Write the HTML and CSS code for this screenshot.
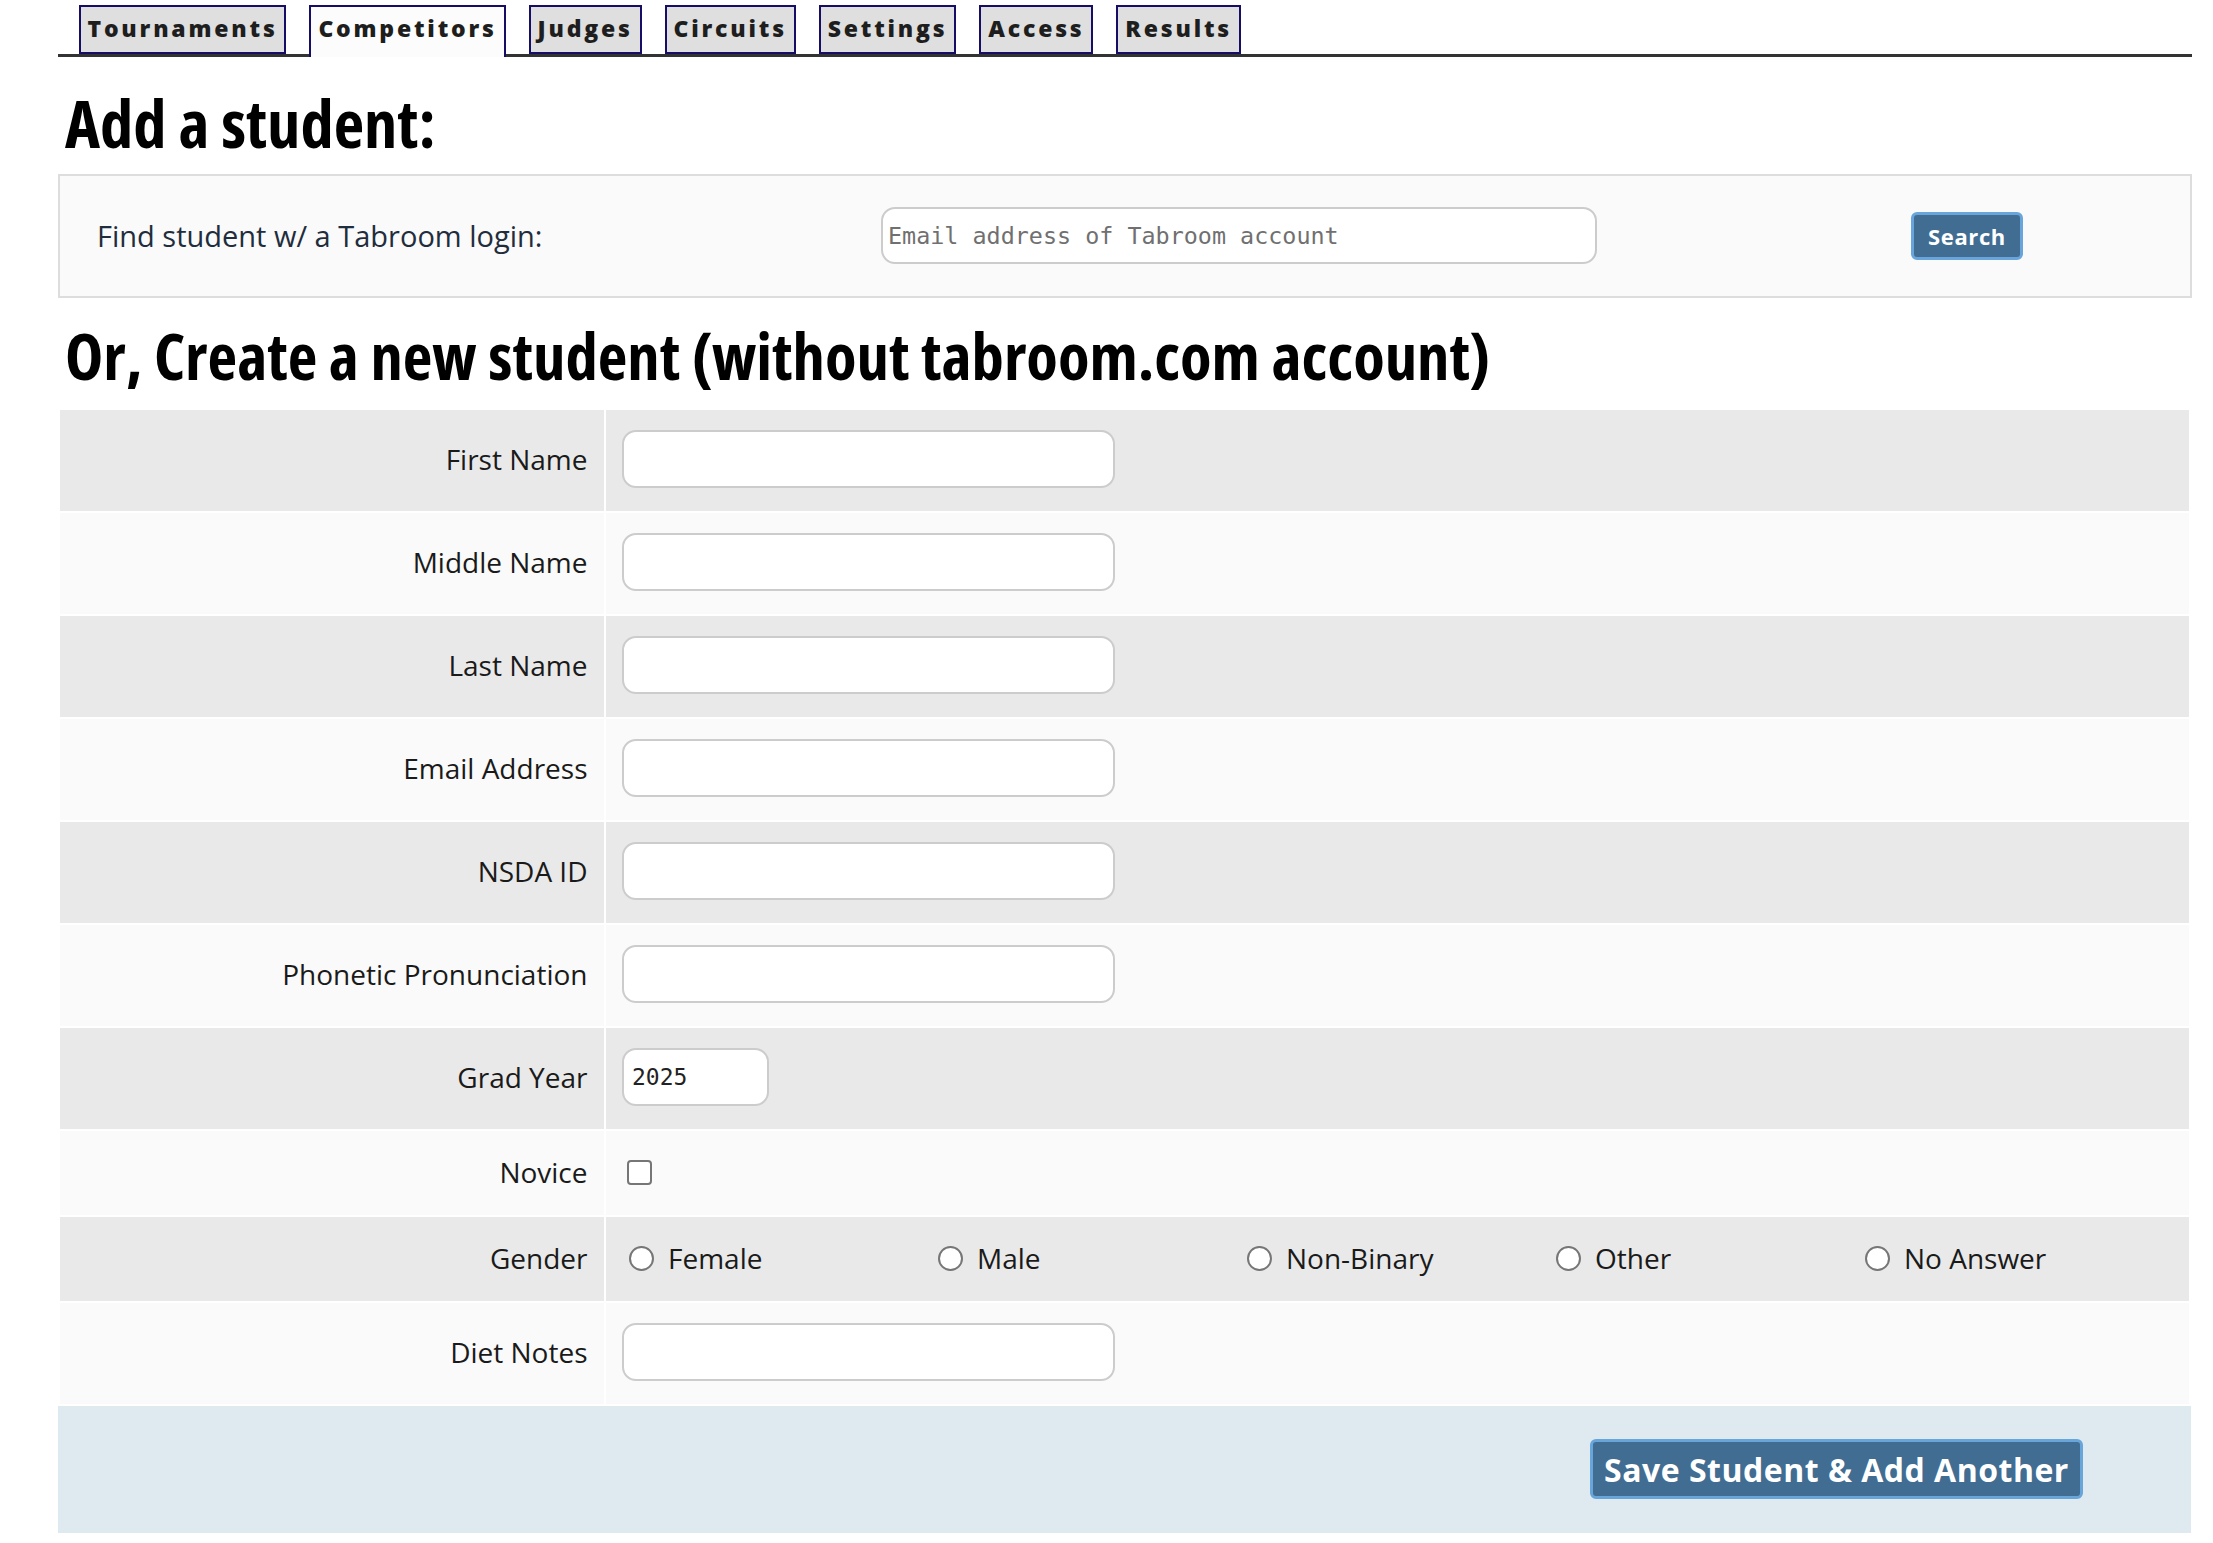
FILE: index.html
```html
<!DOCTYPE html>
<html lang="en">
<head>
<meta charset="utf-8">
<title>Add a student</title>
<link rel="stylesheet" href="styles.css">
</head>
<body>
<div class="page">
  <nav class="tabs">
    <a class="tab">Tournaments</a>
    <a class="tab tab-active">Competitors</a>
    <a class="tab">Judges</a>
    <a class="tab">Circuits</a>
    <a class="tab">Settings</a>
    <a class="tab">Access</a>
    <a class="tab">Results</a>
  </nav>

  <h1 class="title title-main">Add a student:</h1>

  <form class="finder">
    <label class="finder-label">Find student w/ a Tabroom login:</label>
    <input class="finder-input" type="text" placeholder="Email address of Tabroom account">
    <button class="btn btn-small" type="button">Search</button>
  </form>

  <h2 class="title title-sub">Or, Create a new student (without tabroom.com account)</h2>

  <table class="student-form">
    <tr class="odd">
      <td class="lbl">First Name</td>
      <td class="val"><input class="field" type="text"></td>
    </tr>
    <tr class="even">
      <td class="lbl">Middle Name</td>
      <td class="val"><input class="field" type="text"></td>
    </tr>
    <tr class="odd">
      <td class="lbl">Last Name</td>
      <td class="val"><input class="field" type="text"></td>
    </tr>
    <tr class="even">
      <td class="lbl">Email Address</td>
      <td class="val"><input class="field" type="text"></td>
    </tr>
    <tr class="odd">
      <td class="lbl">NSDA ID</td>
      <td class="val"><input class="field" type="text"></td>
    </tr>
    <tr class="even">
      <td class="lbl">Phonetic Pronunciation</td>
      <td class="val"><input class="field" type="text"></td>
    </tr>
    <tr class="odd">
      <td class="lbl">Grad Year</td>
      <td class="val"><input class="field field-short" type="text" value="2025"></td>
    </tr>
    <tr class="even text-row">
      <td class="lbl">Novice</td>
      <td class="val"><input class="check" type="checkbox"></td>
    </tr>
    <tr class="odd text-row">
      <td class="lbl">Gender</td>
      <td class="val">
        <div class="radios">
          <label class="opt"><input class="radio" type="radio" name="g"><span>Female</span></label>
          <label class="opt"><input class="radio" type="radio" name="g"><span>Male</span></label>
          <label class="opt"><input class="radio" type="radio" name="g"><span>Non-Binary</span></label>
          <label class="opt"><input class="radio" type="radio" name="g"><span>Other</span></label>
          <label class="opt"><input class="radio" type="radio" name="g"><span>No Answer</span></label>
        </div>
      </td>
    </tr>
    <tr class="even">
      <td class="lbl">Diet Notes</td>
      <td class="val"><input class="field" type="text"></td>
    </tr>
  </table>

  <div class="footer">
    <button class="btn btn-big" type="button">Save Student &amp; Add Another</button>
  </div>
</div>
</body>
</html>
```
FILE: styles.css
```css
* { box-sizing: border-box; }

body {
  margin: 0;
  background: #ffffff;
  font-family: "Open Sans", "DejaVu Sans", sans-serif;
  color: #1a1a1a;
}

.page {
  margin-left: 58px;
  width: 2134px;
}

/* tabs */
.tabs {
  display: flex;
  align-items: flex-end;
  gap: 23px;
  margin-top: 5px;
  padding-left: 20.5px;
  border-bottom: 3px solid #333333;
}

.tab {
  display: block;
  height: 49px;
  padding: 0 6.8px 2px 7px;
  border: 2px solid #150d66;
  background: #dfdfdf;
  font-weight: 800;
  font-size: 23px;
  line-height: 43px;
  letter-spacing: 2.8px;
  color: #1e1e1e;
}

.tab-active {
  position: relative;
  z-index: 1;
  height: 52px;
  margin-bottom: -3px;
  padding-bottom: 7px;
  border-bottom: none;
  background: #fcfcfc;
}

/* headings */
.title {
  margin: 0 0 0 7px;
  font-family: "Open Sans", "Liberation Sans Narrow", "DejaVu Sans Condensed", sans-serif;
  font-stretch: 75%;
  font-weight: 700;
  line-height: 84px;
  color: #000000;
}

.title-main {
  margin-top: 22.7px;
  font-size: 66.5px;
}

.title-sub {
  margin-top: 15px;
  font-size: 64.7px;
}

/* finder box */
.finder {
  display: grid;
  grid-template-columns: 784px 716px auto;
  align-items: center;
  height: 124px;
  margin-top: 10.3px;
  padding-left: 37px;
  border: 2px solid #dddddd;
  background: #fafafa;
}

.finder-label {
  font-size: 29px;
  line-height: 40px;
  color: #1f2d3d;
}

.finder-input {
  width: 716px;
  height: 57px;
  padding: 0 5px;
  border: 2px solid #cccccc;
  border-radius: 14px;
  background: #ffffff;
  font-family: "DejaVu Sans Mono", monospace;
  font-size: 23.4px;
  color: #222222;
}

.finder-input::placeholder { color: #707070; }

.btn {
  border: 3px solid #67a5da;
  border-radius: 6px;
  background: #416d92;
  color: #ffffff;
  font-family: "Open Sans", sans-serif;
  font-weight: 700;
  padding: 0;
}

.btn-small {
  justify-self: start;
  margin-left: 314px;
  width: 112px;
  height: 48px;
  font-size: 22px;
  letter-spacing: 0.6px;
}

/* form table */
.student-form {
  width: 2133px;
  margin-top: 11px;
  border-collapse: separate;
  border-spacing: 2px;
  table-layout: fixed;
}

.student-form td {
  vertical-align: middle;
  padding: 20.5px 16px 22.5px;
}

.text-row td {
  padding-bottom: 21.5px;
}

.odd td { background: #e9e9e9; }
.even td { background: #fafafa; }

.lbl {
  width: 544px;
  text-align: right;
  padding-right: 16.5px !important;
  font-size: 28px;
  line-height: 42px;
  color: #1a1a1a;
}

.field {
  display: block;
  width: 493px;
  height: 58px;
  padding: 0 8px;
  border: 2px solid #cccccc;
  border-radius: 14px;
  background: #ffffff;
  font-family: "DejaVu Sans Mono", monospace;
  font-size: 23px;
  color: #222222;
}

.field-short { width: 147px; }

.check {
  appearance: none;
  display: block;
  width: 25px;
  height: 25px;
  margin: 0 0 0 5px;
  border: 2px solid #767676;
  border-radius: 4px;
  background: #ffffff;
}

.radios {
  display: grid;
  grid-template-columns: repeat(5, 309px);
}

.opt {
  display: flex;
  align-items: center;
  font-size: 28px;
  line-height: 42px;
  color: #1a1a1a;
}

.radio {
  appearance: none;
  flex: none;
  width: 25px;
  height: 25px;
  margin: 0 14px 0 7px;
  border: 2px solid #767676;
  border-radius: 50%;
  background: #ffffff;
}

/* footer */
.footer {
  display: flex;
  justify-content: flex-end;
  align-items: center;
  width: 2133px;
  height: 127px;
  padding-right: 108px;
  background: #dfeaf0;
}

.btn-big {
  width: 493px;
  height: 60px;
  font-size: 32px;
  letter-spacing: 0.5px;
}
```
